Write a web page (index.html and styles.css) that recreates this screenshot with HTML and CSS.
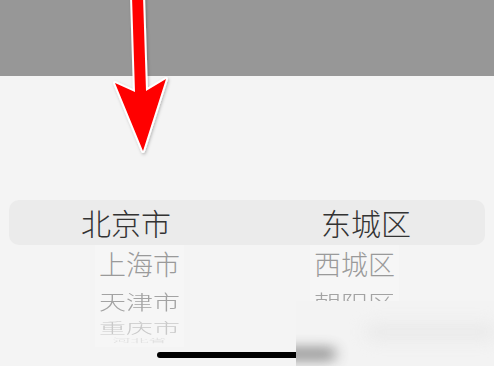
FILE: index.html
```html
<!DOCTYPE html>
<html lang="zh">
<head>
<meta charset="utf-8">
<link rel="stylesheet" href="styles.css">
</head>
<body>
<div class="screen">
  <div class="topbar"></div>
  <div class="main">
    <div class="band">
      <div class="sel">北京市</div>
      <div class="sel">东城区</div>
    </div>
    <div class="rows">
      <div class="col">
        <div class="item r1">上海市</div>
        <div class="item r2">天津市</div>
        <div class="item r3">重庆市</div>
        <div class="item r4">河北省</div>
      </div>
      <div class="col col2">
        <div class="item r1">西城区</div>
        <div class="item r2">朝阳区</div>
      </div>
    </div>
  </div>
  <div class="home"></div>
  <div class="blur"><div class="blur-bar"></div><div class="blur-streak"></div></div>
  <svg class="arrow" width="494" height="170" viewBox="0 0 494 170">
    <defs>
      <filter id="sh" x="-20%" y="-20%" width="140%" height="140%">
        <feDropShadow dx="1" dy="1.5" stdDeviation="1.5" flood-color="#000" flood-opacity="0.25"/>
      </filter>
    </defs>
    <polygon points="132,-4 143,-4 146,91 166,79 143,151 115,83 135,92" fill="#ff0000" stroke="#ffffff" stroke-width="4" stroke-linejoin="round" paint-order="stroke" filter="url(#sh)"/>
  </svg>
</div>
</body>
</html>
```

FILE: styles.css
```css
html, body {
  margin: 0;
  padding: 0;
}
body {
  width: 494px;
  height: 366px;
  overflow: hidden;
  background: #f4f4f4;
  font-family: "Noto Sans CJK SC", "Noto Sans", sans-serif;
  font-weight: 300;
}
.screen {
  position: relative;
  width: 494px;
  height: 366px;
  overflow: hidden;
}
.topbar {
  height: 76px;
  background: #979797;
}
.main {
  padding-top: 124px;
}
.band {
  margin: 0 9px;
  height: 45px;
  border-radius: 10px;
  background: #ebebeb;
  display: grid;
  grid-template-columns: 1fr 1fr;
  align-items: center;
}
.sel {
  text-align: center;
  font-size: 30px;
  line-height: 45px;
  color: #333333;
}
.band .sel:first-child {
  padding-right: 4px;
}
.rows {
  display: grid;
  grid-template-columns: 1fr 1fr;
  padding: 0 32px;
}
.col {
  justify-self: center;
  display: flex;
  flex-direction: column;
  align-items: center;
  background: #f6f6f6;
  padding: 0 4px;
}
.item {
  font-size: 27px;
  text-align: center;
  white-space: nowrap;
}
.r1 {
  height: 38px;
  line-height: 38px;
  color: #9a9a9a;
}
.r2 {
  height: 38px;
  line-height: 38px;
  color: #a3a3a3;
  transform: scaleY(0.75);
}
.r3 {
  height: 12px;
  line-height: 12px;
  color: #c9c9c9;
  transform: scaleY(0.52);
}
.r4 {
  height: 14px;
  line-height: 14px;
  color: #dcdcdc;
  font-size: 18px;
  transform: scaleY(0.25);
}
.col2 .r2 {
  transform: scaleY(0.8);
}
.home {
  position: absolute;
  left: 157px;
  top: 352px;
  width: 180px;
  height: 6px;
  border-radius: 3px;
  background: #000;
}
.blur {
  position: absolute;
  left: 296px;
  top: 301px;
  right: 0;
  bottom: 0;
  background: #f3f3f3;
  overflow: hidden;
}
.blur-bar {
  position: absolute;
  left: -30px;
  top: 48px;
  width: 70px;
  height: 10px;
  border-radius: 5px;
  background: #555;
  filter: blur(7px);
  opacity: 0.8;
}
.blur-streak {
  position: absolute;
  left: 70px;
  top: 24px;
  width: 130px;
  height: 14px;
  border-radius: 7px;
  background: #e8e8e8;
  filter: blur(8px);
}
.arrow {
  position: absolute;
  left: 0;
  top: 0;
}
```
